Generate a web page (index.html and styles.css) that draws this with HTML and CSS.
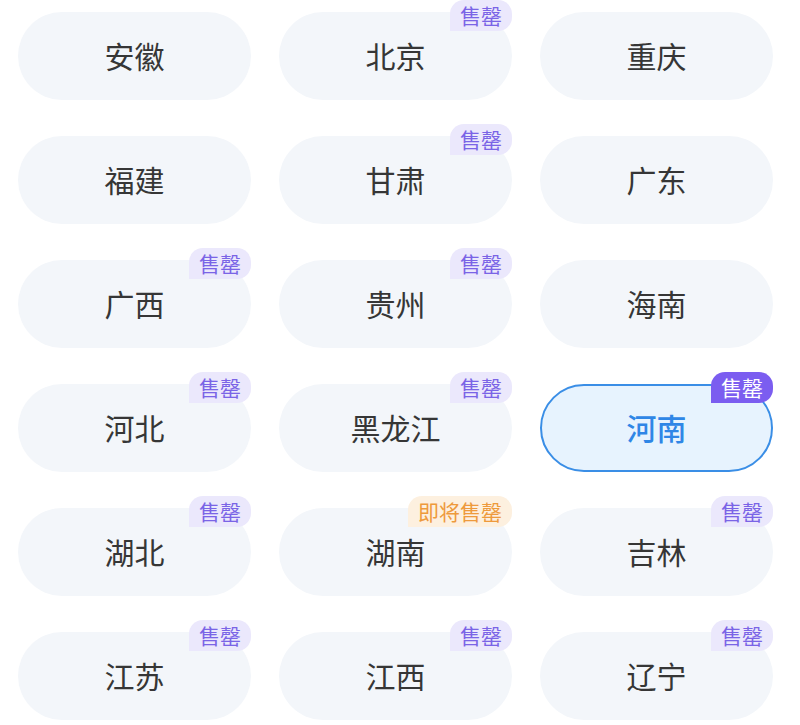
FILE: index.html
```html
<!DOCTYPE html>
<html lang="zh-CN">
<head>
<meta charset="utf-8">
<link rel="stylesheet" href="styles.css">
</head>
<body>
<div class="grid">
  <div class="pill"><span class="name">安徽</span></div>
  <div class="pill"><span class="name">北京</span><span class="badge">售罄</span></div>
  <div class="pill"><span class="name">重庆</span></div>
  <div class="pill"><span class="name">福建</span></div>
  <div class="pill"><span class="name">甘肃</span><span class="badge">售罄</span></div>
  <div class="pill"><span class="name">广东</span></div>
  <div class="pill"><span class="name">广西</span><span class="badge">售罄</span></div>
  <div class="pill"><span class="name">贵州</span><span class="badge">售罄</span></div>
  <div class="pill"><span class="name">海南</span></div>
  <div class="pill"><span class="name">河北</span><span class="badge">售罄</span></div>
  <div class="pill"><span class="name">黑龙江</span><span class="badge">售罄</span></div>
  <div class="pill selected"><span class="name">河南</span><span class="badge">售罄</span></div>
  <div class="pill"><span class="name">湖北</span><span class="badge">售罄</span></div>
  <div class="pill"><span class="name">湖南</span><span class="badge soon">即将售罄</span></div>
  <div class="pill"><span class="name">吉林</span><span class="badge">售罄</span></div>
  <div class="pill"><span class="name">江苏</span><span class="badge">售罄</span></div>
  <div class="pill"><span class="name">江西</span><span class="badge">售罄</span></div>
  <div class="pill"><span class="name">辽宁</span><span class="badge">售罄</span></div>
</div>
</body>
</html>
```
FILE: styles.css
```css
html, body {
  margin: 0;
  padding: 0;
  background: #ffffff;
}
body {
  font-family: "Noto Sans CJK SC", "Noto Sans", sans-serif;
}
.grid {
  display: grid;
  grid-template-columns: repeat(3, 233px);
  grid-auto-rows: 88px;
  column-gap: 28px;
  row-gap: 36px;
  padding: 12px 0 0 18px;
}
.pill {
  position: relative;
  box-sizing: border-box;
  background: #f3f6fa;
  border-radius: 44px;
  display: flex;
  align-items: center;
  justify-content: center;
  padding-bottom: 3px;
}
.name {
  font-size: 30px;
  color: #363636;
  line-height: 1;
}
.pill.selected {
  background: #e7f3fe;
  border: 2px solid #3a8ee6;
}
.pill.selected .name {
  color: #2f86e6;
  font-weight: 500;
}
.badge {
  position: absolute;
  top: -12px;
  right: 0;
  height: 31px;
  padding: 0 10px;
  display: flex;
  align-items: center;
  font-size: 21px;
  line-height: 1;
  color: #7a64e6;
  background: #ebe8fc;
  border-radius: 14px 14px 14px 0;
}
.pill.selected .badge {
  top: -14px;
  right: -2px;
  background: #7b5df0;
  color: #ffffff;
}
.badge.soon {
  color: #ee9a3c;
  background: #fdf0df;
}
```
